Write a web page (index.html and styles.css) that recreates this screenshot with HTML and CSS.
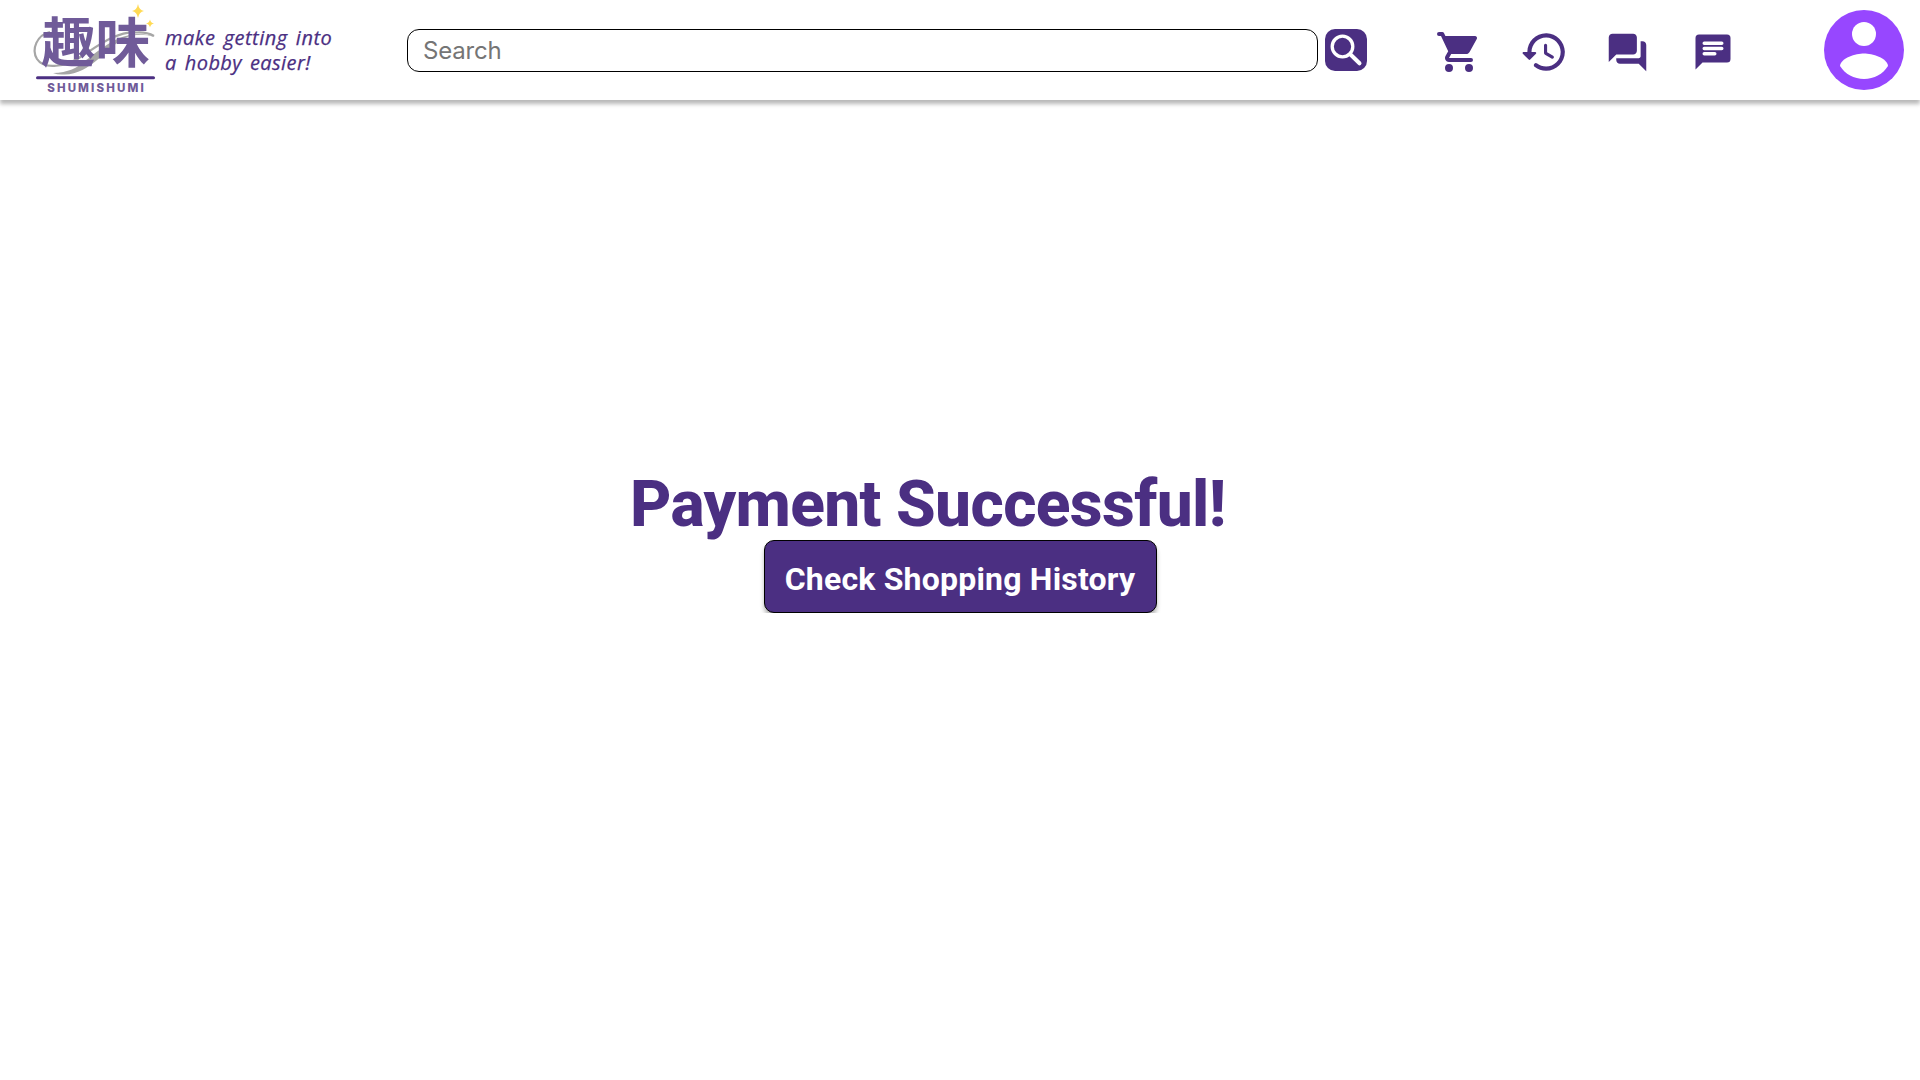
FILE: index.html
```html
<!DOCTYPE html>
<html lang="en">
<head>
<meta charset="utf-8">
<title>ShumiShumi - Payment Successful</title>
<link rel="stylesheet" href="styles.css">
</head>
<body>
<header class="header">
  <a class="brand">
    <svg class="logo" viewBox="30 0 130 100">
      <path class="orbit" d="M50 32C37 35 31 49 37 59C44 70 66 67 82 56C102 43 118 31 137 32.500Q147 32 154 36"/>
      <path class="swoosh" d="M155 37Q138 32 125 38C108 46 90 75 64 74.500Q58 75 53 73C68 73 78 67 84 62C101 49 125 26 155 37Z"/>
      <text class="kanji" x="41" y="62.500" textLength="109" lengthAdjust="spacingAndGlyphs">趣味</text>
      <path class="star" d="M138 4Q139 10 144 11Q139 12 138 18Q137 12 132 11Q137 10 138 4ZM150 19.500Q150.700 23 154 23.500Q150.700 24 150 27.500Q149.300 24 146 23.500Q149.300 23 150 19.500Z"/>
      <path class="rule" d="M37.500 77.700H153.500"/>
      <text class="name" x="47.200" y="91.500" textLength="96.500">SHUMISHUMI</text>
    </svg>
    <span class="tagline"><span class="line-one">make getting into</span><span class="line-two">a hobby easier!</span></span>
  </a>
  <form class="search">
    <input class="search-input" type="text" placeholder="Search" aria-label="Search">
    <button class="search-button" type="button" aria-label="Search">
      <svg viewBox="0 0 42 42"><circle cx="17.500" cy="17.500" r="10.300"/><path d="M25.500 25.500L34.500 34.300"/></svg>
    </button>
  </form>
  <nav class="nav">
    <svg class="cart" viewBox="0 0 24 24"><path d="M7 18a2 2 0 1 0 0 4 2 2 0 0 0 0-4ZM17 18a2 2 0 1 0 0 4 2 2 0 0 0 0-4ZM2 2a1 1 0 0 0 0 2h1l3.600 7.590-1.350 2.440C4.520 15.370 5.480 17 7 17h11a1 1 0 0 0 0-2H7l1.100-2h7.450c.75 0 1.410-.41 1.750-1.030l3.580-6.490A1 1 0 0 0 20 4H5.210l-.67-1.430A1 1 0 0 0 3.640 2Z"/></svg>
    <svg class="history" viewBox="0 0 24 24"><path d="M13.260 3C8.170 2.860 4 6.950 4 12H2.210c-.45 0-.67.54-.35.850l2.790 2.800c.2.200.51.200.71 0l2.790-2.800A.5.500 0 0 0 7.790 12H6c0-3.900 3.180-7.050 7.100-7 3.720.050 6.850 3.180 6.900 6.900.050 3.910-3.100 7.100-7 7.100-1.610 0-3.100-.55-4.280-1.480a.99.990 0 0 0-1.320.08c-.42.420-.39 1.130.08 1.490A8.860 8.860 0 0 0 13 21c5.050 0 9.140-4.170 9-9.260C21.870 7.050 17.950 3.130 13.260 3ZM12.750 8a.75.750 0 0 0-.75.750v3.680c0 .35.190.68.490.860l3.120 1.850c.36.210.82.090 1.030-.26.210-.36.090-.82-.26-1.030l-2.880-1.710V8.740A.74.740 0 0 0 12.750 8Z"/></svg>
    <svg class="forum" viewBox="0 0 24 24"><path d="M20 6h-1v8c0 .55-.45 1-1 1H6v1c0 1.100.9 2 2 2h10l4 4V8c0-1.100-.9-2-2-2ZM17 11V4c0-1.100-.9-2-2-2H4c-1.100 0-2 .9-2 2v13l4-4h9c1.100 0 2-.9 2-2Z"/></svg>
    <svg class="message" viewBox="0 0 24 24"><path d="M20 2H4a2 2 0 0 0-2 2v18l4-4h14a2 2 0 0 0 2-2V4a2 2 0 0 0-2-2Z"/><path class="lines" d="M7 7H17M7 10H17M7 13H13"/></svg>
  </nav>
  <svg class="avatar" viewBox="0 0 80 80"><circle cx="40" cy="40" r="40"/><circle class="cutout" cx="40" cy="24" r="12"/><path class="cutout" d="M16 56C16.500 48 32 43.500 40 43.500S63.500 48 64 56C59 64 50 69 40 69S21 64 16 56Z"/></svg>
</header>
<main class="content">
  <h1 class="title">Payment Successful!</h1>
  <button class="history-button" type="button">Check Shopping History</button>
</main>
</body>
</html>
```
FILE: styles.css
```css
* { box-sizing: border-box; }
body { margin: 0; background: #fff; font-family: Inter, sans-serif; overflow: hidden; }
svg { display: block; flex: none; }
.header { display: flex; align-items: center; height: 100px; padding: 0 16px 0 30px; background: #fff; box-shadow: 0 4px 4px rgba(0, 0, 0, .28); }
.brand { display: flex; align-items: center; width: 377px; }
.logo { width: 130px; height: 100px; }
.orbit { fill: none; stroke: #a6a6a6; stroke-width: 2.2; }
.swoosh { fill: #a6a6a6; }
.star { fill: #ffda55; }
.kanji { font: 700 54px "Noto Sans CJK JP", sans-serif; fill: #705b99; }
.rule { stroke: #4b2f82; stroke-width: 3; stroke-linecap: round; }
.name { font: 800 11.5px Inter, sans-serif; fill: #705b99; }
.tagline { display: flex; flex-direction: column; margin-left: 5px; color: #4b2f82; font: italic 500 20px/25px "Open Sans", sans-serif; -webkit-text-stroke: .25px #4b2f82; white-space: nowrap; }
.line-one { letter-spacing: .5px; word-spacing: 2.5px; }
.line-two { letter-spacing: .4px; word-spacing: 2.5px; }
.search { display: flex; gap: 7px; width: 960px; height: 43px; }
.search-input { width: 911px; height: 43px; padding: 0 15px; border: 1px solid #000; border-radius: 12px; background: #fff; font: 24px Inter, sans-serif; letter-spacing: -.2px; }
.search-input::placeholder { color: #757575; opacity: 1; }
.search-button { width: 42px; height: 42px; padding: 0; border: 0; border-radius: 10px; background: #4b2f82; }
.search-button svg { width: 42px; height: 42px; fill: none; stroke: #fff; stroke-width: 3.3; stroke-linecap: round; }
.search-button path { stroke-width: 4; }
.nav { display: flex; align-items: center; margin-left: 68px; padding-top: 4px; fill: #4b2f82; }
.cart { width: 48px; height: 48px; }
.history { width: 50px; height: 50px; margin: 0 0 1px 35.5px; }
.forum { width: 45px; height: 45px; margin: 0 0 0 36.5px; }
.message { width: 42px; height: 42px; margin: 0 0 0 41.5px; }
.lines { stroke: #fff; stroke-width: 2; stroke-linecap: round; }
.avatar { width: 80px; height: 80px; margin-left: auto; fill: #9747ff; }
.cutout { fill: #fff; }
.content { display: flex; flex-direction: column; align-items: center; padding-top: 363px; }
.title { width: 660px; height: 77px; margin: 0; padding-top: 3px; color: #4b2f82; font: 800 64px/77px Roboto, sans-serif; letter-spacing: -.65px; white-space: nowrap; }
.history-button { width: 393px; height: 73px; padding: 5px 0 0; border: 1px solid #000; border-radius: 10px; background: #4b2f82; box-shadow: 0 4px 4px rgba(0, 0, 0, .3); color: #fff; font: 700 32px Roboto, sans-serif; letter-spacing: .2px; white-space: nowrap; }
```
